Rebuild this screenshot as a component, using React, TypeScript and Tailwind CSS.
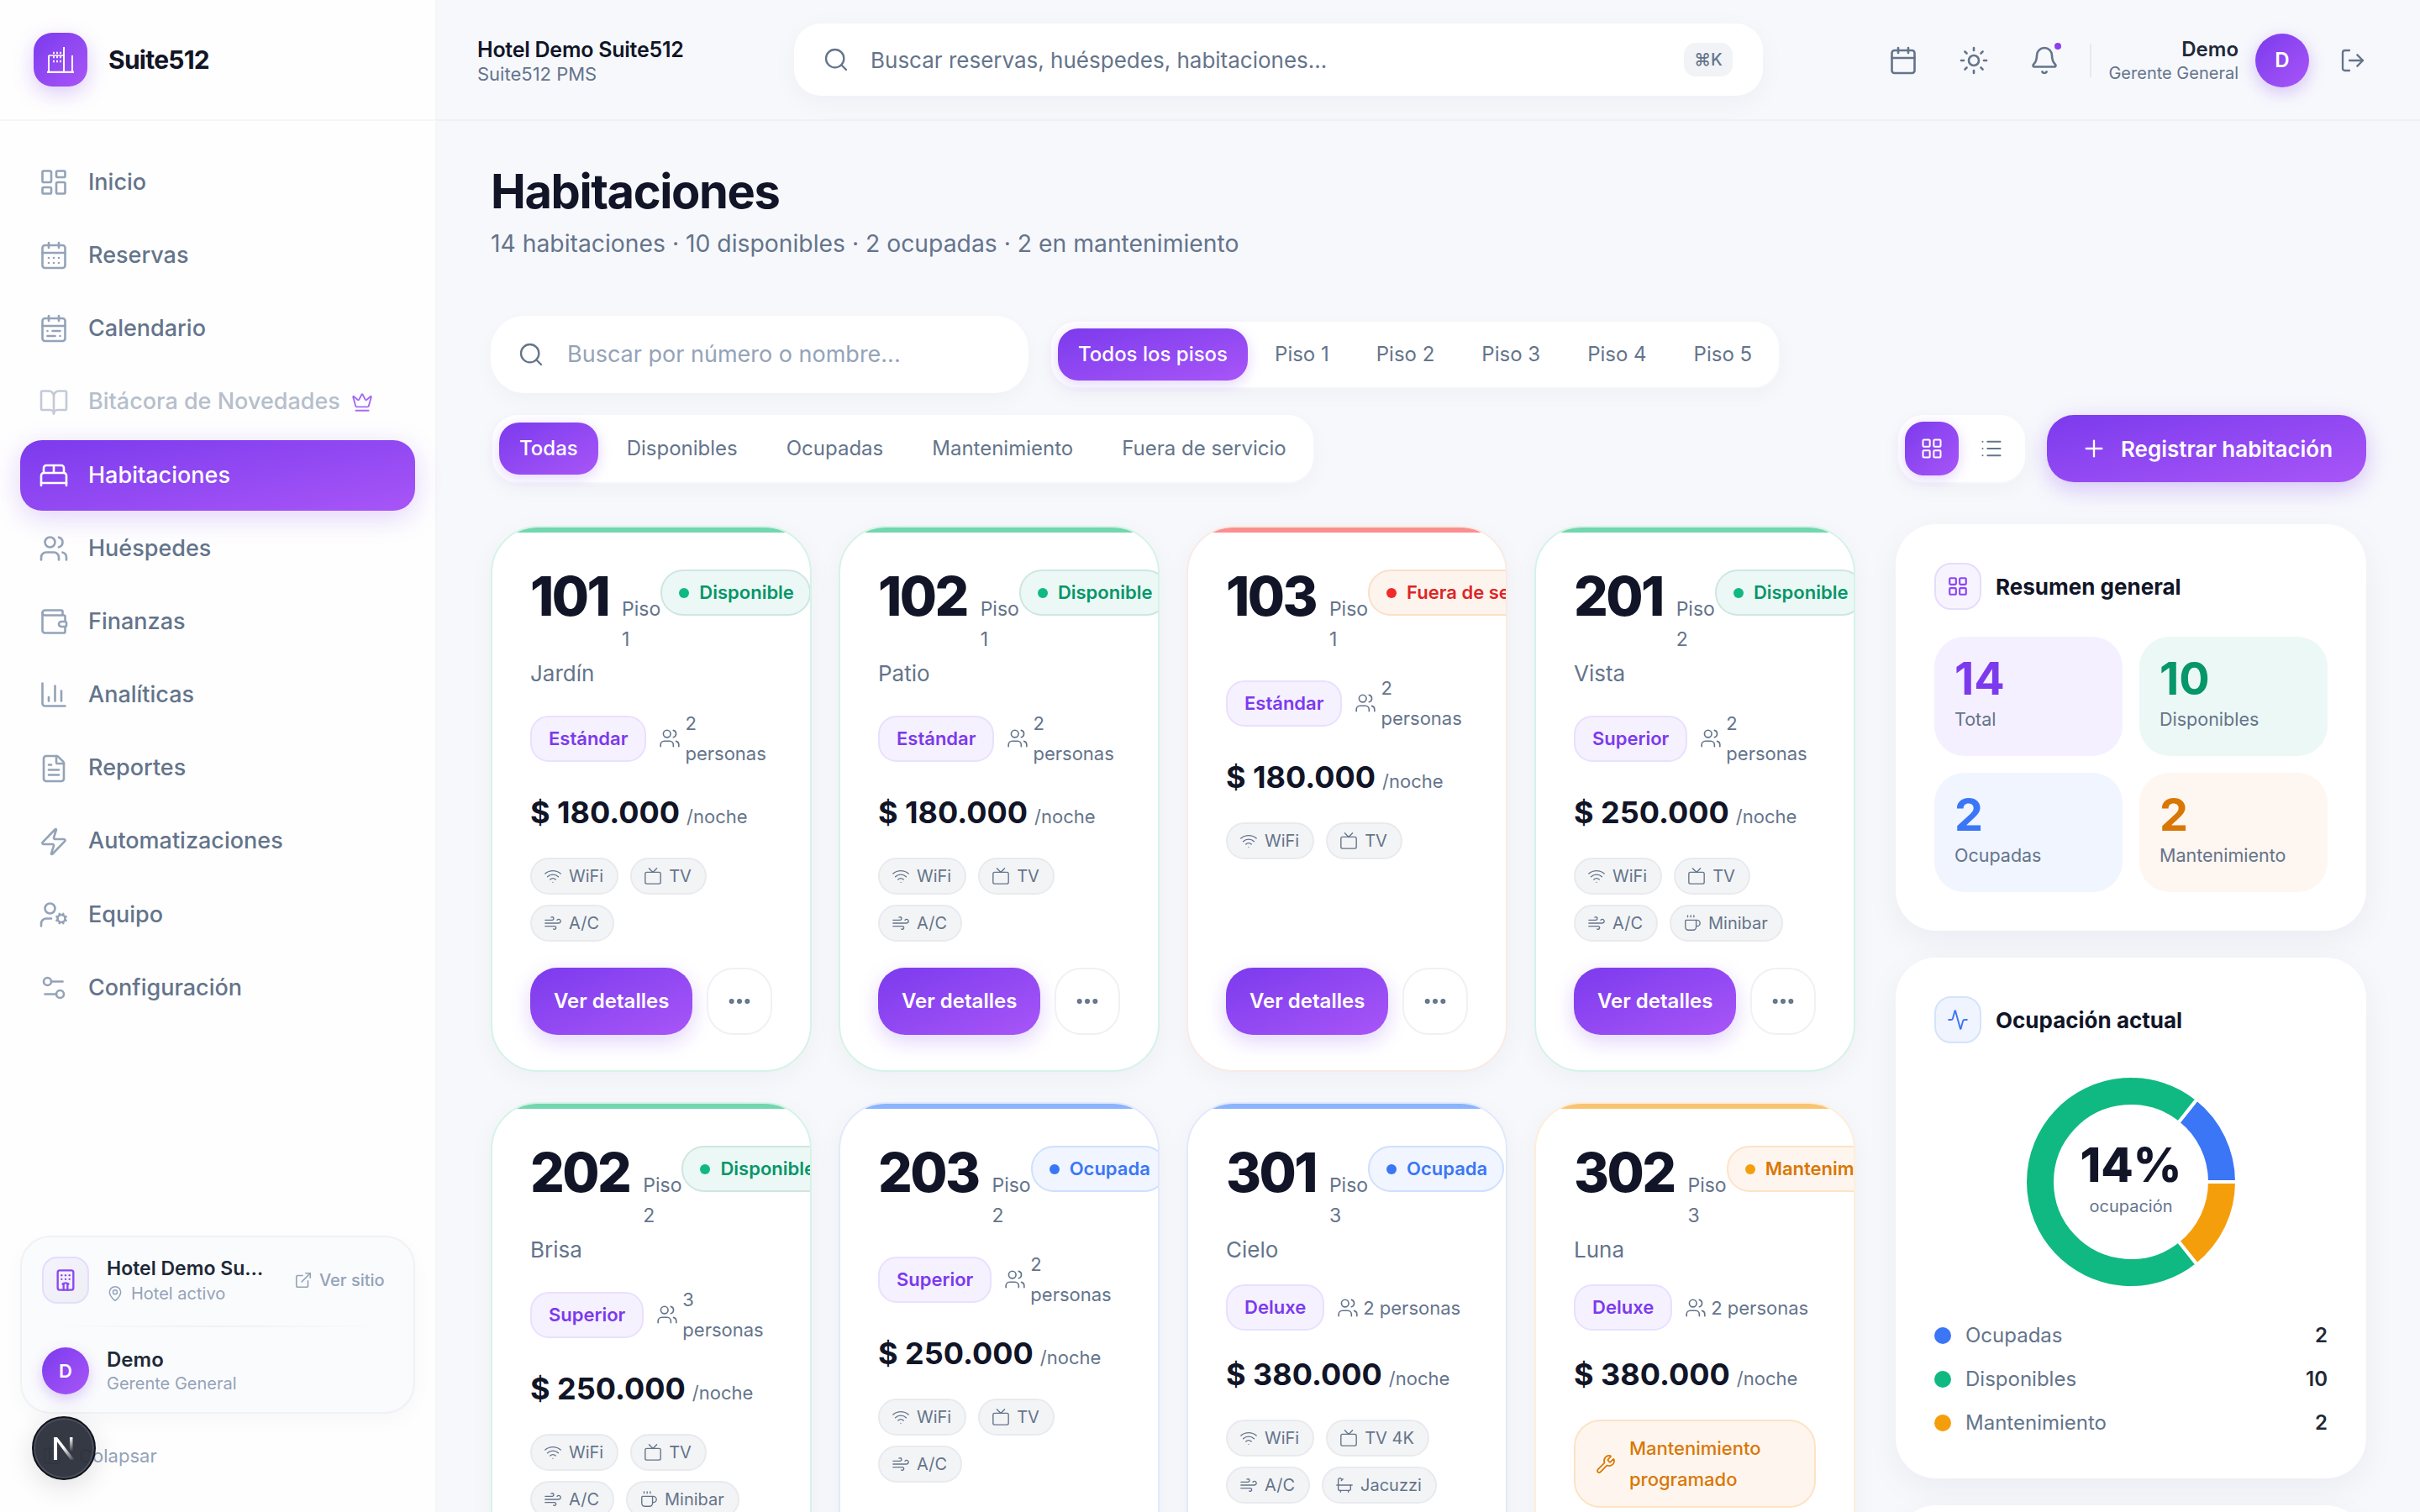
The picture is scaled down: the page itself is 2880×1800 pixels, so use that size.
import {
  Activity, Bath, BedDouble, Bell, BookOpen, Calendar, CalendarDays, CalendarRange, ChartColumn, Coffee, Crown,
  Ellipsis, ExternalLink, FileText, Hotel, LayoutDashboard, LayoutGrid, List, LogOut, MapPin, PanelLeftClose, Plus,
  Search, Settings2, Sun, Tv, UserCog, Users, Wallet, Wifi, Wind, Wrench, Zap,
} from 'lucide-react';

const gradient = 'bg-linear-to-br from-[#7c3aed] to-[#a855f7]';

const navItems = [
  { label: 'Inicio', icon: LayoutDashboard },
  { label: 'Reservas', icon: CalendarDays },
  { label: 'Calendario', icon: CalendarRange },
  { label: 'Bitácora de Novedades', icon: BookOpen, locked: true },
  { label: 'Habitaciones', icon: BedDouble, active: true },
  { label: 'Huéspedes', icon: Users },
  { label: 'Finanzas', icon: Wallet },
  { label: 'Analíticas', icon: ChartColumn },
  { label: 'Reportes', icon: FileText },
  { label: 'Automatizaciones', icon: Zap },
  { label: 'Equipo', icon: UserCog },
  { label: 'Configuración', icon: Settings2 },
];

const statusStyles = {
  Disponible: {
    card: 'border-[#d5f3e7]',
    bar: 'bg-[#72d6ae]',
    badge: 'border-[#cfe6e0] bg-[#ecf8f5] text-[#059669]',
    dot: 'bg-[#10b981]',
  },
  Ocupada: {
    card: 'border-[#e2e9fd]',
    bar: 'bg-[#8ab4fb]',
    badge: 'border-[#cfe0fd] bg-[#f0f5ff] text-[#3b76f6]',
    dot: 'bg-[#3b76f6]',
  },
  Mantenimiento: {
    card: 'border-[#fdeeda]',
    bar: 'bg-[#f8c471]',
    badge: 'border-[#fde3c6] bg-[#fef6ee] text-[#d97706]',
    dot: 'bg-[#f59e0b]',
  },
  'Fuera de servicio': {
    card: 'border-[#f8ebe4]',
    bar: 'bg-[#fb8f8f]',
    badge: 'border-[#fae0c8] bg-[#fdf4ee] text-[#dc2626]',
    dot: 'bg-[#ef2b2b]',
  },
};

const amenityIcons = { WiFi: Wifi, TV: Tv, 'TV 4K': Tv, 'A/C': Wind, Minibar: Coffee, Jacuzzi: Bath };

type Room = {
  number: string;
  floor: number;
  name?: string;
  type: string;
  guests: number;
  price: string;
  status: keyof typeof statusStyles;
  amenities: (keyof typeof amenityIcons)[];
  maintenance?: boolean;
};

const rooms: Room[] = [
  { number: '101', floor: 1, name: 'Jardín', type: 'Estándar', guests: 2, price: '$ 180.000', status: 'Disponible', amenities: ['WiFi', 'TV', 'A/C'] },
  { number: '102', floor: 1, name: 'Patio', type: 'Estándar', guests: 2, price: '$ 180.000', status: 'Disponible', amenities: ['WiFi', 'TV', 'A/C'] },
  { number: '103', floor: 1, type: 'Estándar', guests: 2, price: '$ 180.000', status: 'Fuera de servicio', amenities: ['WiFi', 'TV'] },
  { number: '201', floor: 2, name: 'Vista', type: 'Superior', guests: 2, price: '$ 250.000', status: 'Disponible', amenities: ['WiFi', 'TV', 'A/C', 'Minibar'] },
  { number: '202', floor: 2, name: 'Brisa', type: 'Superior', guests: 3, price: '$ 250.000', status: 'Disponible', amenities: ['WiFi', 'TV', 'A/C', 'Minibar'] },
  { number: '203', floor: 2, type: 'Superior', guests: 2, price: '$ 250.000', status: 'Ocupada', amenities: ['WiFi', 'TV', 'A/C'] },
  { number: '301', floor: 3, name: 'Cielo', type: 'Deluxe', guests: 2, price: '$ 380.000', status: 'Ocupada', amenities: ['WiFi', 'TV 4K', 'A/C', 'Jacuzzi'] },
  { number: '302', floor: 3, name: 'Luna', type: 'Deluxe', guests: 2, price: '$ 380.000', status: 'Mantenimiento', amenities: [], maintenance: true },
];

function LogoMark() {
  return (
    <svg width="34" height="32" viewBox="0 0 34 32" fill="none" stroke="white" strokeWidth="2">
      <path d="M1 31h32" strokeWidth="2.5" />
      <path d="M3 31V11M21 31V1M31 31V11" />
      <path d="M3 11h18" strokeWidth="1.5" />
      <path d="M8 8h2M12 8h2M16 8h2M8 13h2M12 13h2M16 13h2M8 18h2M12 18h2M16 18h2" strokeWidth="2.5" strokeOpacity="0.9" />
    </svg>
  );
}

function Sidebar() {
  return (
    <aside className="w-[520px] h-full shrink-0 flex flex-col bg-[#fefefe] border-r-2 border-[#f4f5f8] relative">
      <div className="h-[144px] shrink-0 flex items-center gap-[25px] pl-[40px] border-b-2 border-[#f4f5f8]">
        <div className={`w-[64px] h-[64px] rounded-[22px] flex items-center justify-center ${gradient} shadow-[0_8px_24px_rgba(124,58,237,0.25)]`}>
          <LogoMark />
        </div>
        <span className="text-[30px] font-bold tracking-[-0.025em] text-[#111527]">Suite512</span>
      </div>

      <nav className="flex flex-col gap-[3.2px] px-[24px] pt-[31px]">
        {navItems.map((item) => {
          const Icon = item.icon;
          if (item.active) {
            return (
              <div key={item.label} className={`h-[84px] rounded-[26px] flex items-center gap-[23px] pl-[22px] text-white ${gradient} shadow-[0_8px_32px_rgba(124,58,237,0.22)]`}>
                <Icon size={36} strokeWidth={1.75} />
                <span className="text-[27px] font-medium">{item.label}</span>
              </div>
            );
          }
          return (
            <div key={item.label} className={`h-[84px] flex items-center gap-[23px] pl-[22px] ${item.locked ? 'text-[#b6bfcc]' : 'text-[#64748b]'}`}>
              <Icon size={36} strokeWidth={1.75} className={item.locked ? 'text-[#c3cad6]' : 'text-[#94a3b8]'} />
              <span className="text-[27px] font-medium">{item.label}</span>
              {item.locked && <Crown size={26} strokeWidth={1.75} className="text-[#a46bf5] -ml-[10px]" />}
            </div>
          );
        })}
      </nav>

      <div className="mt-auto px-[24px] pb-[40px]">
        <div className="h-[212px] rounded-[36px] border-2 border-[#f0f1f5] bg-[#fafbfd] px-[24px] shadow-[0_8px_24px_rgba(15,23,42,0.03)]">
          <div className="h-[105px] flex items-center gap-[21px] pb-[3px]">
            <div className="w-[56px] h-[56px] shrink-0 rounded-[18px] border-2 border-[#e6dcfd] bg-linear-to-br from-[#f4f3ff] to-[#eeeef3] flex items-center justify-center text-[#8b46f2]">
              <Hotel size={28} strokeWidth={2} />
            </div>
            <div className="w-[190px] shrink-0 min-w-0">
              <p className="truncate text-[23px] leading-[32px] font-semibold text-[#1f2937]">Hotel Demo Suite512</p>
              <p className="flex items-center gap-[9px] text-[20px] leading-[28px] text-[#94a3b8]">
                <MapPin size={20} strokeWidth={1.75} />
                Hotel activo
              </p>
            </div>
            <div className="flex items-center gap-[8px] text-[20px] font-medium text-[#94a3b8] whitespace-nowrap ml-[12px]">
              <ExternalLink size={22} strokeWidth={1.75} />
              Ver sitio
            </div>
          </div>
          <div className="h-[2px] bg-linear-to-r from-transparent via-[#eef1f6] to-transparent" />
          <div className="flex items-center gap-[21px] pt-[24px]">
            <div className={`w-[56px] h-[56px] rounded-full flex items-center justify-center text-[22px] font-semibold text-white ${gradient} shadow-[0_6px_16px_rgba(124,58,237,0.25)]`}>D</div>
            <div>
              <p className="text-[24px] leading-[30px] font-semibold text-[#1f2937]">Demo</p>
              <p className="text-[20px] leading-[26px] text-[#94a3b8]">Gerente General</p>
            </div>
          </div>
        </div>
        <div className="h-[54px] mt-[23px] flex items-center gap-[20px] pl-[26px] text-[#94a3b8]">
          <PanelLeftClose size={24} strokeWidth={1.75} />
          <span className="text-[22px]">Colapsar</span>
        </div>
      </div>

      {/* dev tools badge */}
      <div className="absolute left-[38px] bottom-[38px] w-[76px] h-[76px] rounded-full bg-[#2a2e3a]/95 border-2 border-[#10131c] ring-2 ring-inset ring-[#4b4f5c] flex items-center justify-center shadow-[0_8px_32px_rgba(0,0,0,0.12)]">
        <svg width="28" height="30" viewBox="0 0 28 30">
          <defs>
            <linearGradient id="n-diag" x1="0" y1="0" x2="1" y2="1">
              <stop offset="0.45" stopColor="white" />
              <stop offset="1" stopColor="white" stopOpacity="0" />
            </linearGradient>
            <linearGradient id="n-bar" x1="0" y1="0" x2="0" y2="1">
              <stop offset="0" stopColor="white" />
              <stop offset="1" stopColor="white" stopOpacity="0" />
            </linearGradient>
          </defs>
          <path d="M2 2h4v27H2z" fill="white" />
          <path d="M2 2h4l21 27h-5z" fill="url(#n-diag)" />
          <path d="M21 2h3.5v17H21z" fill="url(#n-bar)" />
        </svg>
      </div>
    </aside>
  );
}

function TopBar() {
  return (
    <header className="h-[144px] shrink-0 flex items-center px-[48px] border-b-2 border-[#eef0f4]">
      <div className="w-[377px] shrink-0 pt-[1px]">
        <p className="text-[25px] leading-[32px] font-semibold tracking-[-0.01em] text-[#111527]">Hotel Demo Suite512</p>
        <p className="text-[22px] leading-[26px] text-[#64748b]">Suite512 PMS</p>
      </div>
      <div className="w-[1153px] h-[86px] shrink-0 rounded-[32px] bg-white flex items-center pl-[34px] pr-[36px] shadow-[0_8px_32px_rgba(15,23,42,0.04)]">
        <Search size={32} strokeWidth={1.75} className="text-[#64748b]" />
        <span className="ml-[25px] text-[26px] text-[#64748b]">Buscar reservas, huéspedes, habitaciones...</span>
        <span className="ml-auto w-[58px] h-[40px] rounded-[14px] bg-[#f1f3f6] flex items-center justify-center text-[20px] font-medium text-[#64748b]">⌘K</span>
      </div>
      <div className="ml-auto flex items-center gap-[20px] mt-[2px]">
        <div className="flex items-center gap-[12px] text-[#64748b] -mr-[2px]">
          <span className="w-[72px] h-[72px] flex items-center justify-center"><Calendar size={36} strokeWidth={1.75} /></span>
          <span className="w-[72px] h-[72px] flex items-center justify-center"><Sun size={36} strokeWidth={1.75} /></span>
          <span className="w-[72px] h-[72px] flex items-center justify-center relative">
            <Bell size={36} strokeWidth={1.75} />
            <span className="absolute top-[12px] right-[13px] w-[14px] h-[14px] rounded-full bg-[#8b3ff0] border-[3px] border-[#f7f8fc]" />
          </span>
        </div>
        <div className="w-[2px] h-[40px] bg-[#e8eaef]" />
        <div className="text-right">
          <p className="text-[24px] leading-[30px] font-semibold text-[#1f2937]">Demo</p>
          <p className="text-[20px] leading-[26px] text-[#64748b]">Gerente General</p>
        </div>
        <div className={`w-[64px] h-[64px] rounded-full flex items-center justify-center text-[24px] font-semibold text-white ${gradient} shadow-[0_6px_20px_rgba(124,58,237,0.28)]`}>D</div>
        <span className="w-[64px] h-[64px] flex items-center justify-center text-[#64748b]"><LogOut size={32} strokeWidth={1.75} /></span>
      </div>
    </header>
  );
}

function Segmented({ items, className }: { items: string[]; className: string }) {
  return (
    <div className={`flex items-center rounded-[32px] bg-white border-2 border-[#f5f6fa] px-[8px] shadow-[0_8px_24px_rgba(15,23,42,0.03)] ${className}`}>
      {items.map((item, i) => (
        <span
          key={item}
          className={`h-[62px] px-[24px] flex items-center rounded-[24px] text-[24px] whitespace-nowrap ${
            i === 0 ? `font-medium text-white ${gradient} shadow-[0_4px_16px_rgba(124,58,237,0.22)]` : 'text-[#64748b]'
          }`}
        >
          {item}
        </span>
      ))}
    </div>
  );
}

function RoomCard({ room }: { room: Room }) {
  const style = statusStyles[room.status];
  return (
    <div className={`h-[650px] flex flex-col rounded-[56px] bg-white border-2 overflow-hidden relative px-[45px] pt-[50px] pb-[42px] shadow-[0_8px_32px_rgba(15,23,42,0.04)] ${style.card}`}>
      <div className={`absolute top-0 left-0 right-0 h-[6px] ${style.bar}`} />
      <div className="flex items-start justify-between">
        <div className="flex items-baseline gap-[16px]">
          <span className="text-[64px] leading-none font-extrabold tracking-[-0.04em] text-[#111527]">{room.number}</span>
          <span className="text-[23px] leading-[36px] text-[#64748b]">Piso {room.floor}</span>
        </div>
        <span className={`h-[55px] shrink-0 flex items-center gap-[12px] pl-[20px] pr-[18px] rounded-[27px] border-2 text-[22px] font-semibold whitespace-nowrap ${style.badge}`}>
          <span className={`w-[12px] h-[12px] rounded-full ${style.dot}`} />
          {room.status}
        </span>
      </div>
      {room.name && <p className="mt-[4px] text-[26px] leading-[38px] text-[#64748b]">{room.name}</p>}

      <div className="mt-[22px] flex items-center gap-[15px]">
        <span className="h-[55px] shrink-0 flex items-center px-[20px] rounded-[22px] border-2 border-[#e9e0fe] bg-[#f5f1ff] text-[22px] font-semibold text-[#7c3aed]">{room.type}</span>
        <span className="flex items-center gap-[5px] text-[22px] leading-[36px] text-[#64748b]">
          <Users size={26} strokeWidth={1.5} className="shrink-0" />
          <span>{room.guests} personas</span>
        </span>
      </div>

      <div className="mt-[24px] h-[56px] flex items-baseline">
        <span className="text-[36px] leading-[56px] font-bold text-[#111527]">{room.price}</span>
        <span className="ml-[8px] text-[22px] text-[#64748b]">/noche</span>
      </div>

      {room.maintenance ? (
        <div className="mt-[26px] h-[105px] rounded-[32px] border-2 border-[#fde3c6] bg-[#fef6ee] flex items-center gap-[16px] px-[24px] text-[#d97706]">
          <Wrench size={24} strokeWidth={1.75} className="shrink-0" />
          <span className="text-[22px] leading-[37px] font-medium">Mantenimiento programado</span>
        </div>
      ) : (
        <div className="mt-[26px] flex flex-wrap gap-x-[14px] gap-y-[12px]">
          {room.amenities.map((a) => {
            const Icon = amenityIcons[a];
            return (
              <span key={a} className="h-[44px] flex items-center gap-[8px] pl-[14px] pr-[16px] rounded-[22px] border-2 border-[#e8eaee] bg-[#f3f4f6] text-[20px] text-[#64748b]">
                <Icon size={22} strokeWidth={1.5} />
                {a}
              </span>
            );
          })}
        </div>
      )}

      <div className="mt-auto flex items-center gap-[17px]">
        <span className={`h-[80px] flex items-center px-[28px] rounded-[32px] text-[24px] font-semibold text-white whitespace-nowrap ${gradient} shadow-[0_8px_24px_rgba(124,58,237,0.22)]`}>Ver detalles</span>
        <span className="w-[78px] h-[80px] rounded-[32px] border-2 border-[#f0f1f5] bg-white flex items-center justify-center text-[#64748b]"><Ellipsis size={32} strokeWidth={2.5} /></span>
      </div>
    </div>
  );
}

function arcPath(startDeg: number, endDeg: number, outer: number, inner: number) {
  const pt = (deg: number, r: number) => {
    const a = ((deg - 90) * Math.PI) / 180;
    return `${(130 + r * Math.cos(a)).toFixed(2)} ${(130 + r * Math.sin(a)).toFixed(2)}`;
  };
  const large = endDeg - startDeg > 180 ? 1 : 0;
  return `M${pt(startDeg, outer)} A${outer} ${outer} 0 ${large} 1 ${pt(endDeg, outer)} L${pt(endDeg, inner)} A${inner} ${inner} 0 ${large} 0 ${pt(startDeg, inner)} Z`;
}

function Donut() {
  return (
    <div className="relative w-[260px] h-[260px] mx-auto">
      <svg width="260" height="260" viewBox="0 0 260 260">
        <path d={arcPath(38.6, 90, 126, 90)} fill="#3b76f6" stroke="white" strokeWidth="4" />
        <path d={arcPath(90, 141.4, 126, 90)} fill="#f59e0b" stroke="white" strokeWidth="4" />
        <path d={arcPath(141.4, 398.6, 126, 90)} fill="#10b981" stroke="white" strokeWidth="4" />
      </svg>
      <div className="absolute inset-0 flex flex-col items-center justify-center">
        <span className="text-[56px] leading-[60px] font-extrabold text-[#111527] -mt-[8px]">14%</span>
        <span className="mt-[5px] text-[20px] leading-[28px] text-[#64748b]">ocupación</span>
      </div>
    </div>
  );
}

function RightColumn() {
  const stats = [
    { value: '14', label: 'Total', box: 'bg-[#f5f0ff]', text: 'text-[#7c3aed]' },
    { value: '10', label: 'Disponibles', box: 'bg-[#ecf8f5]', text: 'text-[#059669]' },
    { value: '2', label: 'Ocupadas', box: 'bg-[#f0f5ff]', text: 'text-[#3b76f6]' },
    { value: '2', label: 'Mantenimiento', box: 'bg-[#fef6f0]', text: 'text-[#d97706]' },
  ];
  const legend = [
    { label: 'Ocupadas', value: 2, dot: 'bg-[#3b76f6]' },
    { label: 'Disponibles', value: 10, dot: 'bg-[#10b981]' },
    { label: 'Mantenimiento', value: 2, dot: 'bg-[#f59e0b]' },
  ];
  return (
    <div className="w-[560px] shrink-0 flex flex-col gap-[32px]">
      <section className="h-[484px] shrink-0 rounded-[48px] bg-white px-[46px] pt-[46px] shadow-[0_12px_40px_rgba(15,23,42,0.05)]">
        <div className="flex items-center gap-[17px]">
          <span className="w-[56px] h-[56px] rounded-[20px] border-2 border-[#e6dcfd] bg-[#f7f4ff] flex items-center justify-center text-[#8b46f2]"><LayoutGrid size={26} strokeWidth={2} /></span>
          <h2 className="text-[26px] font-bold text-[#111527]">Resumen general</h2>
        </div>
        <div className="mt-[32px] grid grid-cols-2 gap-[20px]">
          {stats.map((s) => (
            <div key={s.label} className={`h-[142px] rounded-[36px] px-[24px] pt-[18px] ${s.box}`}>
              <p className={`text-[54px] leading-[64px] font-bold ${s.text}`}>{s.value}</p>
              <p className="mt-[1px] text-[21.5px] leading-[30px] text-[#64748b]">{s.label}</p>
            </div>
          ))}
        </div>
      </section>

      <section className="h-[620px] shrink-0 rounded-[48px] bg-white px-[46px] pt-[46px] shadow-[0_12px_40px_rgba(15,23,42,0.05)]">
        <div className="flex items-center gap-[17px]">
          <span className="w-[56px] h-[56px] rounded-[20px] border-2 border-[#d5e3fd] bg-[#f0f4fe] flex items-center justify-center text-[#3b76f6]"><Activity size={26} strokeWidth={1.75} /></span>
          <h2 className="text-[26px] font-bold text-[#111527]">Ocupación actual</h2>
        </div>
        <div className="mt-[35px]"><Donut /></div>
        <div className="mt-[31px] flex flex-col gap-[8px]">
          {legend.map((l) => (
            <div key={l.label} className="h-[44px] flex items-center text-[24px]">
              <span className={`w-[20px] h-[20px] rounded-full ${l.dot}`} />
              <span className="ml-[17px] text-[#64748b]">{l.label}</span>
              <span className="ml-auto font-semibold text-[#1f2937]">{l.value}</span>
            </div>
          ))}
        </div>
      </section>

      <section className="h-[300px] shrink-0 rounded-[48px] bg-white shadow-[0_12px_40px_rgba(15,23,42,0.05)]" />
    </div>
  );
}

export default function App() {
  return (
    <div className="h-screen w-full flex overflow-hidden bg-[#f7f8fc] font-['Inter',sans-serif]">
      <Sidebar />
      <div className="flex-1 min-w-0 flex flex-col">
        <TopBar />
        <main className="flex-1 min-h-0 overflow-hidden px-[64px] pt-[48px]">
          <h1 className="text-[56px] leading-[72px] font-bold tracking-[-0.025em] text-[#111527]">Habitaciones</h1>
          <p className="mt-[6px] text-[28.3px] leading-[40px] text-[#64748b]">14 habitaciones · 10 disponibles · 2 ocupadas · 2 en mantenimiento</p>

          <div className="mt-[66px] flex items-center gap-[25px]">
            <div className="w-[640px] h-[92px] rounded-[40px] bg-white flex items-center pl-[32px] shadow-[0_8px_24px_rgba(15,23,42,0.03)]">
              <Search size={32} strokeWidth={1.75} className="text-[#64748b]" />
              <span className="ml-[27px] text-[27px] text-[#94a3b8]">Buscar por número o nombre...</span>
            </div>
            <Segmented className="h-[82px] gap-[8px]" items={['Todos los pisos', 'Piso 1', 'Piso 2', 'Piso 3', 'Piso 4', 'Piso 5']} />
          </div>

          <div className="mt-[24px] flex items-center">
            <Segmented className="h-[84px] gap-[10px]" items={['Todas', 'Disponibles', 'Ocupadas', 'Mantenimiento', 'Fuera de servicio']} />
            <div className="ml-auto flex items-center gap-[24px]">
              <div className="w-[155px] h-[84px] rounded-[32px] bg-white border-2 border-[#f5f6fa] flex items-center gap-[8px] px-[8px] shadow-[0_8px_24px_rgba(15,23,42,0.03)]">
                <span className={`w-[64px] h-[64px] rounded-[22px] flex items-center justify-center text-white ${gradient} shadow-[0_4px_16px_rgba(124,58,237,0.22)]`}><LayoutGrid size={28} strokeWidth={1.75} /></span>
                <span className="w-[64px] h-[64px] flex items-center justify-center text-[#64748b]"><List size={28} strokeWidth={1.75} /></span>
              </div>
              <div className={`w-[380px] h-[80px] rounded-[32px] flex items-center justify-center gap-[16px] text-white ${gradient} shadow-[0_8px_28px_rgba(124,58,237,0.28)]`}>
                <Plus size={32} strokeWidth={1.75} />
                <span className="text-[26px] font-semibold">Registrar habitación</span>
              </div>
            </div>
          </div>

          <div className="mt-[48px] flex gap-[48px] items-start">
            <div className="w-[1624px] shrink-0 pt-[2px] grid grid-cols-4 gap-x-[32px] gap-y-[36px]">
              {rooms.map((room) => <RoomCard key={room.number} room={room} />)}
            </div>
            <RightColumn />
          </div>
        </main>
      </div>
    </div>
  );
}
